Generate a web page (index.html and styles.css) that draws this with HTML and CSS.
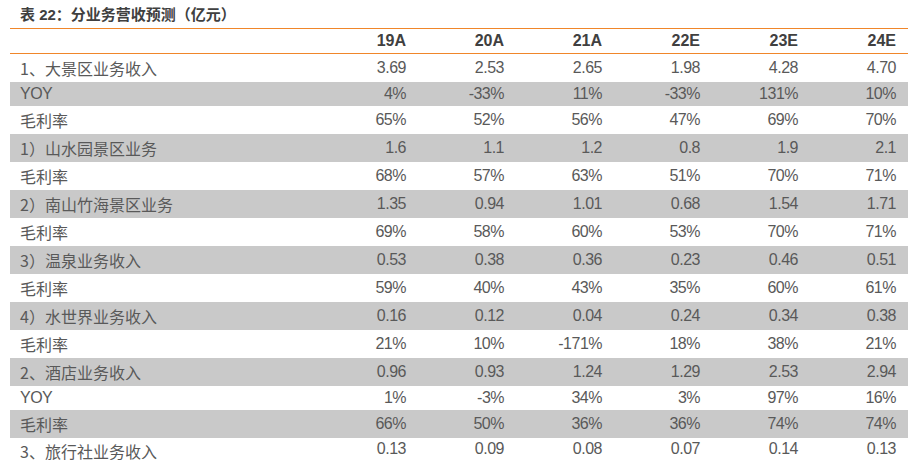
FILE: index.html
```html
<!DOCTYPE html>
<html lang="zh">
<head>
<meta charset="utf-8">
<link rel="stylesheet" href="styles.css">
</head>
<body>
<div class="sheet">
  <div class="title">表 22：分业务营收预测（亿元）</div>
  <div class="row head"><div class="lab"></div><div class="num">19A</div><div class="num">20A</div><div class="num">21A</div><div class="num">22E</div><div class="num">23E</div><div class="num">24E</div></div>
  <div class="row cn"><div class="lab">1、大景区业务收入</div><div class="num">3.69</div><div class="num">2.53</div><div class="num">2.65</div><div class="num">1.98</div><div class="num">4.28</div><div class="num">4.70</div></div>
  <div class="row en gray"><div class="lab">YOY</div><div class="num">4%</div><div class="num">-33%</div><div class="num">11%</div><div class="num">-33%</div><div class="num">131%</div><div class="num">10%</div></div>
  <div class="row cn"><div class="lab">毛利率</div><div class="num">65%</div><div class="num">52%</div><div class="num">56%</div><div class="num">47%</div><div class="num">69%</div><div class="num">70%</div></div>
  <div class="row cn gray"><div class="lab">1）山水园景区业务</div><div class="num">1.6</div><div class="num">1.1</div><div class="num">1.2</div><div class="num">0.8</div><div class="num">1.9</div><div class="num">2.1</div></div>
  <div class="row cn"><div class="lab">毛利率</div><div class="num">68%</div><div class="num">57%</div><div class="num">63%</div><div class="num">51%</div><div class="num">70%</div><div class="num">71%</div></div>
  <div class="row cn gray"><div class="lab">2）南山竹海景区业务</div><div class="num">1.35</div><div class="num">0.94</div><div class="num">1.01</div><div class="num">0.68</div><div class="num">1.54</div><div class="num">1.71</div></div>
  <div class="row cn"><div class="lab">毛利率</div><div class="num">69%</div><div class="num">58%</div><div class="num">60%</div><div class="num">53%</div><div class="num">70%</div><div class="num">71%</div></div>
  <div class="row cn gray"><div class="lab">3）温泉业务收入</div><div class="num">0.53</div><div class="num">0.38</div><div class="num">0.36</div><div class="num">0.23</div><div class="num">0.46</div><div class="num">0.51</div></div>
  <div class="row cn"><div class="lab">毛利率</div><div class="num">59%</div><div class="num">40%</div><div class="num">43%</div><div class="num">35%</div><div class="num">60%</div><div class="num">61%</div></div>
  <div class="row cn gray"><div class="lab">4）水世界业务收入</div><div class="num">0.16</div><div class="num">0.12</div><div class="num">0.04</div><div class="num">0.24</div><div class="num">0.34</div><div class="num">0.38</div></div>
  <div class="row cn"><div class="lab">毛利率</div><div class="num">21%</div><div class="num">10%</div><div class="num">-171%</div><div class="num">18%</div><div class="num">38%</div><div class="num">21%</div></div>
  <div class="row cn gray"><div class="lab">2、酒店业务收入</div><div class="num">0.96</div><div class="num">0.93</div><div class="num">1.24</div><div class="num">1.29</div><div class="num">2.53</div><div class="num">2.94</div></div>
  <div class="row en"><div class="lab">YOY</div><div class="num">1%</div><div class="num">-3%</div><div class="num">34%</div><div class="num">3%</div><div class="num">97%</div><div class="num">16%</div></div>
  <div class="row cn gray"><div class="lab">毛利率</div><div class="num">66%</div><div class="num">50%</div><div class="num">36%</div><div class="num">36%</div><div class="num">74%</div><div class="num">74%</div></div>
  <div class="row cn last"><div class="lab">3、旅行社业务收入</div><div class="num">0.13</div><div class="num">0.09</div><div class="num">0.08</div><div class="num">0.07</div><div class="num">0.14</div><div class="num">0.13</div></div>
</div>
</body>
</html>
```

FILE: styles.css
```css
html, body {
  margin: 0;
  padding: 0;
  background: #ffffff;
}
.sheet {
  padding-left: 10px;
  width: 898px;
  font-family: "Liberation Sans", sans-serif;
  color: #595959;
}
.title {
  height: 28px;
  border-bottom: 1px solid #f0862a;
  padding-left: 10px;
  font-family: "Liberation Sans", "Noto Sans CJK SC", sans-serif;
  font-weight: bold;
  font-size: 15px;
  line-height: 30px;
  color: #404040;
}
.row {
  display: grid;
  grid-template-columns: 299px repeat(6, 98px) 11px;
  align-items: center;
  font-size: 16px;
  letter-spacing: -0.5px;
}
.row.head {
  height: 24px;
  border-bottom: 1px solid #f0862a;
  font-weight: bold;
  font-size: 16px;
  letter-spacing: 0;
  color: #404040;
}
.row.cn { height: 28px; }
.row.en { height: 24px; }
.row.last { height: 24px; align-items: start; padding-top: 2px; }
.row.gray { background: #c9c9c9; }
.lab {
  padding-left: 10px;
  font-size: 16px;
  white-space: nowrap;
}
.cn .lab {
  font-family: "Noto Sans CJK SC", sans-serif;
  font-size: 16px;
  letter-spacing: 0;
  line-height: 22px;
}
.num {
  text-align: right;
  white-space: nowrap;
  padding-right: 1px;
}
```
